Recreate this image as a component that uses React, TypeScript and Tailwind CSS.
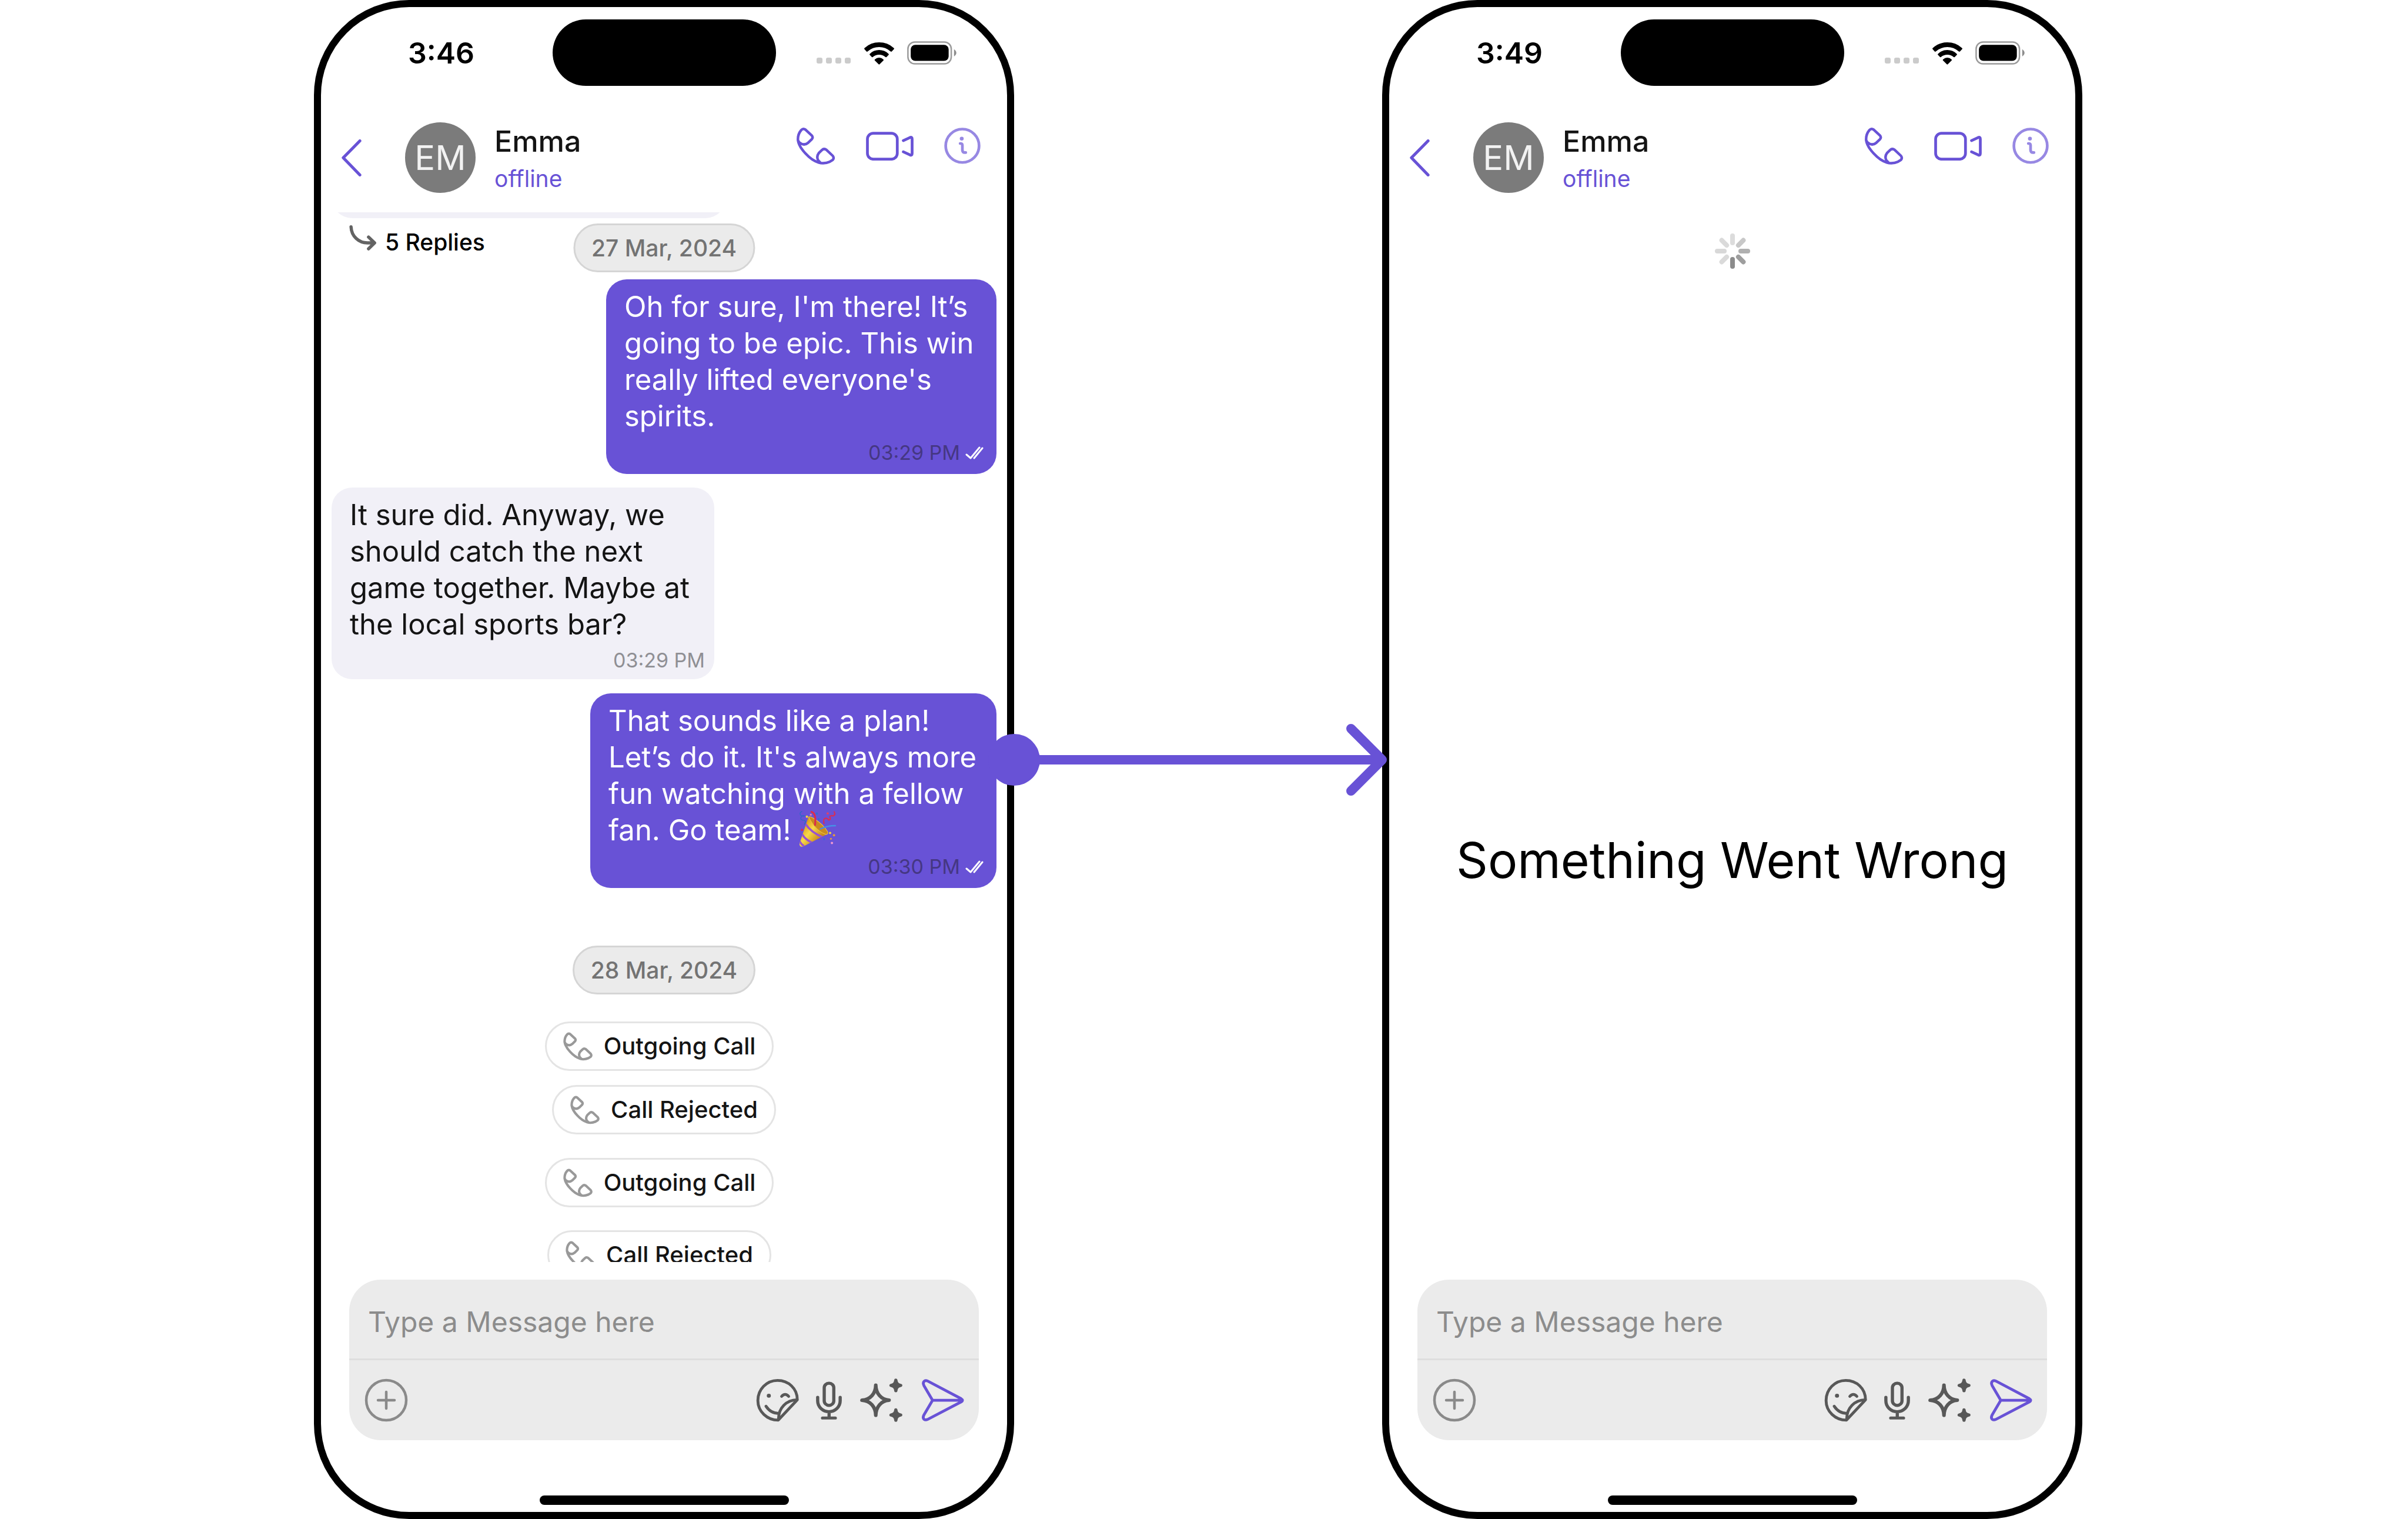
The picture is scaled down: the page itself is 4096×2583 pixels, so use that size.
import React from "react";

type Line = string;

function BackChevron() {
  return (
    <svg viewBox="67 167 122 227" className="h-[63px] w-[34px]" fill="none" stroke="#6852d6" strokeWidth="18" strokeLinecap="round" strokeLinejoin="round" aria-hidden="true">
      <path d="M179 176 L77 280 L179 385" />
    </svg>
  );
}

function PhoneIcon({ className, stroke, strokeWidth }: { className: string; stroke: string; strokeWidth: number }) {
  return (
    <svg viewBox="111 608 243 236" className={className} fill="none" stroke={stroke} strokeWidth={strokeWidth} strokeLinecap="round" strokeLinejoin="round" aria-hidden="true">
      <path d="M123 690 C121 662 132 640 143 627 Q155 614 169 624 L209 661 Q218 672 208 684 L186 705 Q160 727 131 703 L123 690 C130 738 196 812 250 827 Q284 838 320 822 L338 811 Q348 799 338 786 L299 749 Q284 738 271 750 L252 768 Q235 790 248 814 L262 829" />
    </svg>
  );
}

function VideoIcon() {
  return (
    <svg viewBox="540 635 292 176" className="h-[49px] w-[81px]" fill="none" stroke="#6852d6" strokeWidth="17" strokeLinecap="round" strokeLinejoin="round" aria-hidden="true">
      <rect x="549" y="644" width="183" height="159" rx="36" />
      <path d="M769 689 L810 670 Q823 665 823 679 V768 Q823 782 810 777 L769 758" />
    </svg>
  );
}

function InfoIcon() {
  return (
    <svg viewBox="1019 601 224 225" className="h-[62px] w-[62px]" fill="none" stroke="#9788e3" strokeWidth="17" strokeLinecap="round" strokeLinejoin="round" aria-hidden="true">
      <circle cx="1131" cy="713" r="103" />
      <circle cx="1127" cy="669" r="12" fill="#9788e3" stroke="none" />
      <path d="M1117 699 H1121 Q1131 700 1131 710 V740 Q1132 755 1146 755 H1152" />
    </svg>
  );
}

function WifiIcon() {
  return (
    <svg viewBox="527 72 185 137" className="h-[38px] w-[51px]" fill="#000" aria-hidden="true">
      <path d="M529 114 Q525 110 530 106 Q568 72 619 72 Q671 72 709 106 Q714 110 710 114 L697 128 Q694 131 690 128 Q658 101 619 101 Q580 101 548 128 Q545 131 541 128 Z" />
      <path d="M561 149 Q558 145 562 142 Q586 119 619 119 Q652 119 677 142 Q681 145 678 149 L665 162 Q662 165 658 162 Q641 148 619 148 Q597 148 580 162 Q577 165 574 162 Z" />
      <path d="M592 183 Q590 180 593 177 Q604 166 619 166 Q634 166 645 177 Q648 180 646 183 L622 207 Q619 210 616 207 Z" />
    </svg>
  );
}

function BatteryIcon() {
  return (
    <svg viewBox="793 69 302 143" className="h-[40px] w-[84px]" aria-hidden="true">
      <rect x="798" y="74" width="265" height="133" rx="42" fill="none" stroke="#9b9b9b" strokeWidth="9" />
      <rect x="815" y="91" width="232" height="98" rx="28" fill="#000" />
      <path d="M1080 118 Q1094 128 1094 140 Q1094 152 1080 162 Z" fill="#8c8c8c" />
    </svg>
  );
}

function ReplyArrow() {
  return (
    <svg viewBox="114 698 166 156" className="h-[43px] w-[46px]" fill="none" stroke="#636363" strokeWidth="20" strokeLinecap="round" strokeLinejoin="round" aria-hidden="true">
      <path d="M125 708 C127 765 172 810 232 807 H268 M233 771 L270 807 L233 843" />
    </svg>
  );
}

function ReadTicks() {
  return (
    <svg viewBox="0 0 32 22" className="h-[22px] w-[32px]" fill="none" stroke="#fff" strokeWidth="3" strokeLinecap="round" strokeLinejoin="round" role="img" aria-label="Read">
      <path d="M2 14 L9 20 L24 2 M15 20 L29 3" />
    </svg>
  );
}

function PartyPopper() {
  return (
    <svg viewBox="42 48 228 228" className="-my-[8px] inline-block h-[63px] w-[63px] align-[-4px]" fill="none" strokeLinecap="round" role="img" aria-label="Party popper">
      <defs>
        <linearGradient id="cone" x1="60" y1="150" x2="160" y2="230" gradientUnits="userSpaceOnUse">
          <stop offset="0" stopColor="#d99a1c" />
          <stop offset="0.45" stopColor="#f8da48" />
          <stop offset="1" stopColor="#c98a1a" />
        </linearGradient>
        <clipPath id="coneClip">
          <path d="M101 88 L46 250 Q43 278 68 271 L216 194 Z" />
        </clipPath>
      </defs>
      <path d="M101 88 L46 250 Q43 278 68 271 L216 194 Z" fill="url(#cone)" />
      <g clipPath="url(#coneClip)" stroke="#9a52cf" strokeWidth="13">
        <path d="M84 134 Q118 184 186 212" />
        <path d="M62 196 Q80 226 120 246" />
        <path d="M46 238 Q54 254 70 266" />
      </g>
      <path d="M101 90 Q108 82 132 97 Q196 138 219 180 Q224 195 208 196 Q150 180 101 90 Z" fill="#c98b1f" stroke="#edc040" strokeWidth="4" />
      <path d="M119 57 Q150 66 141 138" stroke="#dc2c4c" strokeWidth="11" />
      <path d="M174 162 Q215 142 266 142" stroke="#4690e6" strokeWidth="9" />
      <path d="M61 55 Q42 62 52 78 Q62 86 76 83 Q64 76 55 90 Q48 104 64 108 Q84 110 83 118 L76 134" stroke="#2c68c8" strokeWidth="5" />
      <path d="M259 57 Q270 76 252 82 Q234 78 232 88 Q240 106 226 107 Q212 90 198 100 Q192 108 196 128" stroke="#d92d55" strokeWidth="8" />
      <circle cx="91" cy="87" r="7" fill="#f3d63e" />
      <circle cx="115" cy="75" r="6" fill="#f27ca8" />
      <circle cx="152" cy="68" r="7" fill="#2f6fd2" />
      <circle cx="164" cy="102" r="6" fill="#2f6fd2" />
      <circle cx="219" cy="67" r="7" fill="#e0406a" />
      <circle cx="61" cy="168" r="7" fill="#d92d55" />
      <circle cx="234" cy="187" r="7" fill="#f3d63e" />
      <circle cx="258" cy="201" r="7" fill="#e69a3c" />
      <circle cx="239" cy="223" r="6" fill="#e69a3c" />
      <circle cx="197" cy="225" r="6" fill="#2f6fd2" />
      <circle cx="245" cy="249" r="7" fill="#f29ad0" />
    </svg>
  );
}

function PlusIcon() {
  return (
    <svg viewBox="0 0 74 74" className="h-[74px] w-[74px]" fill="none" stroke="#8a8a8a" strokeWidth="4.500" strokeLinecap="round" aria-hidden="true">
      <circle cx="37" cy="37" r="34" />
      <path d="M37 23 V51 M23 37 H51" />
    </svg>
  );
}

function StickerIcon() {
  return (
    <svg viewBox="155 155 255 267" preserveAspectRatio="none" className="h-[74px] w-[73px]" fill="none" stroke="#585858" strokeWidth="17" strokeLinecap="round" strokeLinejoin="round" aria-hidden="true">
      <path d="M400 284 C400 217 348 167 283 167 C217 167 166 223 166 290 C166 358 221 411 287 411 L400 286 C338 285 286 336 289 408" />
      <path d="M214 325 Q242 369 289 369" />
      <path d="M307 265 Q328 241 349 265" />
      <circle cx="231" cy="261" r="12" fill="#585858" stroke="none" />
    </svg>
  );
}

function MicIcon() {
  return (
    <svg viewBox="513 169 154 236" preserveAspectRatio="none" className="h-[65px] w-[44px]" fill="none" stroke="#585858" strokeWidth="19" strokeLinecap="round" aria-hidden="true">
      <rect x="562" y="180" width="57" height="137" rx="28" />
      <path d="M523 267 V289 A67 67 0 0 0 657 289 V267 M591 360 V392 M552 395 H628" />
    </svg>
  );
}

function SparklesIcon() {
  return (
    <svg viewBox="777 155 251 268" preserveAspectRatio="none" className="h-[74px] w-[72px]" fill="none" stroke="#585858" strokeLinecap="round" strokeLinejoin="round" aria-hidden="true">
      <path strokeWidth="21" d="M870 196 C871 248 902 286 949 289 C902 292 871 330 870 382 C869 330 838 292 788 289 C838 286 869 248 870 196 Z" />
      <path fill="#585858" strokeWidth="19" d="M989 165 Q991 194 1018 198 Q991 202 989 231 Q987 202 960 198 Q987 194 989 165 Z" />
      <path fill="#585858" strokeWidth="19" d="M989 348 Q991 377 1018 380 Q991 384 989 413 Q987 384 960 380 Q987 377 989 348 Z" />
    </svg>
  );
}

function SendIcon() {
  return (
    <svg viewBox="1146 160 252 261" preserveAspectRatio="none" className="h-[72px] w-[72px]" fill="none" stroke="#6852d6" strokeWidth="17" strokeLinecap="round" strokeLinejoin="round" aria-hidden="true">
      <path d="M1210 291 L1159 201 Q1150 182 1161 173 Q1169 167 1180 172 L1380 281 Q1396 291 1380 301 L1180 409 Q1168 415 1159 408 Q1150 398 1159 381 Z M1210 291 H1386" />
    </svg>
  );
}

function Spinner() {
  const blades = [
    { angle: 0, color: "#dcdcdc" },
    { angle: 45, color: "#c8c8c8" },
    { angle: 90, color: "#b0b0b0" },
    { angle: 135, color: "#9e9e9e" },
    { angle: 180, color: "#8c8c8c" },
    { angle: 225, color: "#dadada" },
    { angle: 270, color: "#d8d8d8" },
    { angle: 315, color: "#dadada" },
  ];
  return (
    <svg viewBox="-30 -30 60 60" className="h-[60px] w-[60px]" role="img" aria-label="Loading">
      {blades.map((b) => (
        <line key={b.angle} x1="0" y1="-26" x2="0" y2="-14" stroke={b.color} strokeWidth="8" strokeLinecap="round" transform={`rotate(${b.angle})`} />
      ))}
    </svg>
  );
}

function StatusBar({ time }: { time: string }) {
  return (
    <div className="grid grid-cols-[1fr_380px_1fr] items-center pt-[21px]">
      <div className="pl-[148px] text-[50px] leading-[60px] font-semibold text-black">{time}</div>
      <div className="h-[113px] rounded-full bg-black" />
      <div className="flex items-end justify-end pr-[86px]">
        <div className="mr-[23px] mb-[2px] flex gap-[6px]">
          <span className="size-[10px] rounded-[3px] bg-[#cbcbcb]" />
          <span className="size-[10px] rounded-[3px] bg-[#cbcbcb]" />
          <span className="size-[10px] rounded-[3px] bg-[#cbcbcb]" />
          <span className="size-[10px] rounded-[3px] bg-[#cbcbcb]" />
        </div>
        <div className="mr-[22px]">
          <WifiIcon />
        </div>
        <BatteryIcon />
      </div>
    </div>
  );
}

function ChatHeader() {
  return (
    <header className="flex items-center pt-[62px] pr-[45px] pb-[33px] pl-[35px]">
      <button type="button" aria-label="Back" className="mr-[74px]">
        <BackChevron />
      </button>
      <div className="mr-[32px] flex size-[120px] items-center justify-center rounded-full bg-[#7b7b7b] text-[58px] leading-[60px] text-[#f2f2f2]">EM</div>
      <div className="flex flex-col gap-[11px] pt-[3px]">
        <h1 className="text-[50px] leading-[58px] font-medium text-[#141414]">Emma</h1>
        <p className="text-[39px] leading-[48px] text-[#6852d6]">offline</p>
      </div>
      <div className="ml-auto flex h-[80px] items-center gap-[52px] self-start">
        <button type="button" aria-label="Voice call">
          <PhoneIcon className="h-[65px] w-[67px]" stroke="#6852d6" strokeWidth={16} />
        </button>
        <button type="button" aria-label="Video call">
          <VideoIcon />
        </button>
        <button type="button" aria-label="Conversation info">
          <InfoIcon />
        </button>
      </div>
    </header>
  );
}

function Composer() {
  return (
    <form className="mx-[48px] mt-[30px] flex flex-col rounded-[54px] bg-[#ebebeb]">
      <input
        type="text"
        aria-label="Message"
        placeholder="Type a Message here"
        className="h-[134px] w-full rounded-t-[54px] bg-transparent px-[32px] pt-[8px] text-[48px] text-[#141414] outline-none placeholder:text-[#8c8c8c]"
      />
      <div className="h-[3px] bg-[#dedede]" />
      <div className="flex h-[136px] items-center pr-[25px] pl-[26px]">
        <button type="button" aria-label="Add attachment">
          <PlusIcon />
        </button>
        <button type="button" aria-label="Stickers" className="ml-auto">
          <StickerIcon />
        </button>
        <button type="button" aria-label="Record voice message" className="ml-[29px]">
          <MicIcon />
        </button>
        <button type="button" aria-label="Smart replies" className="ml-[31px]">
          <SparklesIcon />
        </button>
        <button type="submit" aria-label="Send" className="ml-[33px]">
          <SendIcon />
        </button>
      </div>
    </form>
  );
}

function Phone({ time, children }: { time: string; children: React.ReactNode }) {
  return (
    <section className="flex h-full flex-col overflow-hidden rounded-[162px] border-[12px] border-black bg-white">
      <StatusBar time={time} />
      <ChatHeader />
      {children}
      <Composer />
      <div className="mx-auto mt-[94px] mb-[12px] h-[16px] w-[424px] rounded-full bg-black" />
    </section>
  );
}

function DateBadge({ children }: { children: string }) {
  return (
    <div className="rounded-full border-[3px] border-[#d5d5d5] bg-[#ebebeb] px-[28px] py-[13px] text-[39px] leading-[51px] font-medium whitespace-nowrap text-[#737373]">
      {children}
    </div>
  );
}

function Outgoing({ lines, time, width, emoji }: { lines: Line[]; time: string; width: string; emoji?: boolean }) {
  return (
    <article className={`ml-auto rounded-[35px] bg-[#6852d6] pt-[16px] pb-[16px] ${width}`}>
      <p className="px-[31px] text-[49px] leading-[62px] whitespace-pre text-white">
        {lines.join("\n")}
        {emoji ? <PartyPopper /> : null}
      </p>
      <div className="mt-[11px] flex items-center justify-end gap-[9px] pr-[21px]">
        <time className="text-[34px] leading-[40px] text-[#453783]">{time}</time>
        <ReadTicks />
      </div>
    </article>
  );
}

function Incoming({ lines, time }: { lines: Line[]; time: string }) {
  return (
    <article className="mt-[23px] w-[651px] rounded-[35px] bg-[#f1f0f7] pt-[16px] pb-[12px]">
      <p className="px-[31px] text-[49px] leading-[62px] whitespace-pre text-[#141414]">{lines.join("\n")}</p>
      <div className="mt-[10px] flex justify-end pr-[16px]">
        <time className="text-[34px] leading-[40px] text-[#8f8f94]">{time}</time>
      </div>
    </article>
  );
}

function CallPill({ label, className }: { label: string; className: string }) {
  return (
    <div className={`flex shrink-0 justify-center ${className}`}>
      <button type="button" className="flex h-[84px] items-center gap-[19px] rounded-full border-[3px] border-[#e4e4e4] bg-white px-[28px]">
        <PhoneIcon className="h-[49px] w-[50px]" stroke="#999999" strokeWidth={20} />
        <span className="text-[40px] leading-[48px] font-medium text-[#141414]">{label}</span>
      </button>
    </div>
  );
}

function Conversation() {
  return (
    <main className="relative flex min-h-0 flex-1 flex-col overflow-hidden px-[18px]">
      <div className="-mt-[62px] h-[72px] w-[671px] shrink-0 rounded-[35px] bg-[#f1f0f7]" />
      <div className="h-[104px] shrink-0 pt-[12px] pl-[30px]">
        <button type="button" className="flex items-start gap-[15px]">
          <ReplyArrow />
          <span className="pt-[4px] text-[39px] leading-[50px] font-medium text-black">5 Replies</span>
        </button>
      </div>
      <div className="absolute top-[19px] left-1/2 -translate-x-1/2">
        <DateBadge>27 Mar, 2024</DateBadge>
      </div>
      <Outgoing
        width="w-[664px]"
        lines={["Oh for sure, I'm there! It’s", "going to be epic. This win", "really lifted everyone's", "spirits."]}
        time="03:29 PM"
      />
      <Incoming lines={["It sure did. Anyway, we", "should catch the next", "game together. Maybe at", "the local sports bar?"]} time="03:29 PM" />
      <div className="h-[24px] shrink-0" />
      <Outgoing
        width="w-[691px]"
        lines={["That sounds like a plan!", "Let’s do it. It's always more", "fun watching with a fellow", "fan. Go team! "]}
        time="03:30 PM"
        emoji
      />
      <div className="mt-[98px] flex shrink-0 justify-center">
        <DateBadge>28 Mar, 2024</DateBadge>
      </div>
      <CallPill label="Outgoing Call" className="mt-[46px] pr-[16px]" />
      <CallPill label="Call Rejected" className="mt-[24px]" />
      <CallPill label="Outgoing Call" className="mt-[40px] pr-[16px]" />
      <CallPill label="Call Rejected" className="mt-[39px] pr-[16px]" />
    </main>
  );
}

function ErrorState() {
  return (
    <main className="flex min-h-0 flex-1 flex-col items-center overflow-hidden pt-[36px]">
      <Spinner />
      <p className="mt-[951px] text-[84px] leading-[110px] whitespace-nowrap text-black">Something Went Wrong</p>
    </main>
  );
}

function Connector() {
  return (
    <div className="relative z-10 -mr-[10px] -ml-[44px] flex items-center self-center" aria-hidden="true">
      <div className="size-[88px] shrink-0 rounded-full bg-[#6852d6]" />
      <div className="-ml-[4px] h-[16px] flex-1 bg-[#6852d6]" />
      <svg viewBox="0 0 72 124" className="h-[124px] w-[72px] shrink-0" fill="none" stroke="#6852d6" strokeWidth="16" strokeLinecap="round" strokeLinejoin="round">
        <path d="M9 9 L62 62 L9 115" />
        <path d="M0 62 H62" strokeLinecap="butt" />
      </svg>
    </div>
  );
}

export default function App() {
  return (
    <div className="grid h-screen grid-cols-[534fr_1191fr_626fr_1191fr_554fr] bg-white font-['Inter',sans-serif]">
      <div />
      <Phone time="3:46">
        <Conversation />
      </Phone>
      <Connector />
      <Phone time="3:49">
        <ErrorState />
      </Phone>
      <div />
    </div>
  );
}
